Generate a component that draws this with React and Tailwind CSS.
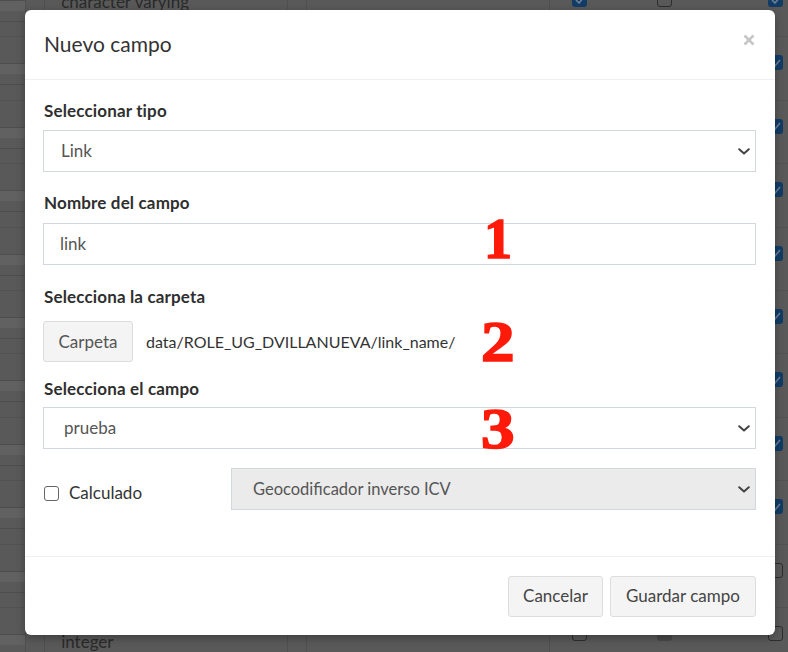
import React from "react";

const font = { fontFamily: "Lato, 'Liberation Sans', sans-serif" };
const serif = { fontFamily: "'Liberation Serif', serif" };

function Chevron() {
  return (
    <svg width="12" height="7" viewBox="0 0 12 7" className="shrink-0">
      <path d="M1.2 1.2 L6 5.6 L10.8 1.2" fill="none" stroke="#444" strokeWidth="2" strokeLinecap="round" strokeLinejoin="round" />
    </svg>
  );
}

function BgCheck({ kind }) {
  if (kind === "blue")
    return (
      <div className="w-[15px] h-[15px] rounded-[3px] bg-[#123c66] flex items-center justify-center">
        <svg width="10" height="8" viewBox="0 0 10 8"><path d="M1 4 L4 7 L9 1" fill="none" stroke="#6d7f93" strokeWidth="1.6" /></svg>
      </div>
    );
  if (kind === "gray") return <div className="w-[15px] h-[15px] rounded-[3px] bg-[#4a4a4a]" />;
  return <div className="w-[15px] h-[15px] rounded-[3px] border border-[#2e2e2e] bg-[#595959]" />;
}

function BgRow({ i }) {
  const right = i <= 8 ? "blue" : "empty";
  const c1 = i === 0 ? "blue" : i === 10 ? "empty" : null;
  const c2 = i === 0 ? "empty" : i === 10 ? "gray" : null;
  return (
    <div className="flex h-[63.4px] shrink-0 border-b border-[#525252]">
      <div className="w-[26px] border-r border-[#505050] flex flex-col">
        <div className="h-[1px] mt-[26px] bg-[#4e4e4e]" />
        <div className="h-[10px] bg-[#616161]" />
        <div className="h-[1px] mt-[10px] bg-[#4e4e4e]" />
      </div>
      <div className="w-[20px] border-r border-[#505050]" />
      <div className={`w-[247px] border-r border-[#505050] flex items-start pl-[16px] text-[17px] text-[#2a2a2a] ${i === 10 ? "pt-[21px]" : "pt-[15px]"}`}>
        {i === 0 ? "character varying" : i === 10 ? "integer" : ""}
      </div>
      <div className="w-[20px] border-r border-[#505050]" />
      <div className="w-[247px] border-r border-[#4f4f4f]" />
      <div className="w-[23px]" />
      <div className="w-[20px] pt-[18px]">{c1 && <BgCheck kind={c1} />}</div>
      <div className="w-[66px]" />
      <div className="w-[20px] pt-[18px]">{c2 && <BgCheck kind={c2} />}</div>
      <div className="w-[94px]" />
      <div className="w-[20px] pt-[18px]"><BgCheck kind={right} /></div>
    </div>
  );
}

const label = "text-[17px] tracking-[0.15px] font-bold text-[#2f2f2f] leading-[21px] pl-[1px]";

export default function App() {
  return (
    <div className="relative w-[788px] h-[652px] overflow-hidden bg-[#595959]" style={font}>
      {/* dimmed background page */}
      <div className="flex flex-col mt-[-26px]">
        {Array.from({ length: 11 }).map((_, i) => (
          <BgRow key={i} i={i} />
        ))}
      </div>

      {/* modal */}
      <div className="absolute left-[25px] top-[10px] w-[750px] h-[625px] bg-white rounded-[6px] flex flex-col shadow-[0_3px_9px_rgba(0,0,0,0.3)]">
        <div className="h-[70px] shrink-0 border-b border-[#f0f0f0] flex items-center justify-between pl-[19px] pr-[20px]">
          <div className="text-[21px] text-[#333] leading-none pb-[2px]">Nuevo campo</div>
          <svg width="12" height="12" viewBox="0 0 12 12" className="mb-[10px]">
            <path d="M1.5 1.5 L10.5 10.5 M10.5 1.5 L1.5 10.5" stroke="#c6c6c6" strokeWidth="2.6" strokeLinecap="butt" />
          </svg>
        </div>

        <div className="flex-1 pl-[18px] pr-[19px] pt-[20px] flex flex-col">
          <div className={`${label} mb-[9px]`}>Seleccionar tipo</div>
          <div className="h-[42px] border border-[#d2d6de] flex items-center justify-between pl-[17px] pr-[5px] text-[17px] text-[#555]">
            <span>Link</span>
            <Chevron />
          </div>

          <div className={`${label} mt-[20px] mb-[10px]`}>Nombre del campo</div>
          <div className="h-[42px] border border-[#d2d6de] flex items-center pl-[16px] text-[17px] text-[#555]">
            link
          </div>

          <div className={`${label} mt-[21px] mb-[14px]`}>Selecciona la carpeta</div>
          <div className="flex items-center gap-[13px]">
            <div className="h-[41px] w-[90px] rounded-[3px] border border-[#ddd] bg-[#f4f4f4] flex items-center justify-center text-[17px] text-[#555]">
              Carpeta
            </div>
            <div className="text-[16px] text-[#333]">data/ROLE_UG_DVILLANUEVA/link_name/</div>
          </div>

          <div className={`${label} mt-[16px] mb-[8px]`}>Selecciona el campo</div>
          <div className="h-[42px] border border-[#d2d6de] flex items-center justify-between pl-[20px] pr-[5px] text-[17px] text-[#555]">
            <span>prueba</span>
            <Chevron />
          </div>

          <div className="flex items-center mt-[19px]">
            <div className="w-[188px] flex items-center gap-[10px] pl-[1px] pt-[8px]">
              <div className="w-[15px] h-[15px] rounded-[3px] border border-[#666] bg-white" />
              <span className="text-[17px] text-[#333]">Calculado</span>
            </div>
            <div className="flex-1 h-[42px] border border-[#d2d6de] bg-[#ebebeb] flex items-center justify-between pl-[21px] pr-[5px] text-[16.5px] text-[#555]">
              <span>Geocodificador inverso ICV</span>
              <Chevron />
            </div>
          </div>
        </div>

        <div className="h-[79px] shrink-0 border-t border-[#f0f0f0] flex items-start justify-end gap-[7px] pt-[19px] pr-[19px]">
          <div className="h-[41px] w-[95px] rounded-[3px] border border-[#ddd] bg-[#f4f4f4] flex items-center justify-center pb-[2px] text-[17px] text-[#444]">
            Cancelar
          </div>
          <div className="h-[41px] w-[146px] rounded-[3px] border border-[#ddd] bg-[#f4f4f4] flex items-center justify-center pb-[2px] text-[17px] text-[#444]">
            Guardar campo
          </div>
        </div>
      </div>

      {/* red annotations */}
      <div className="absolute left-[484px] top-[211px] text-[56px] leading-none font-black text-[#ff1a0a] [-webkit-text-stroke:1.6px_#ff1a0a]" style={serif}>1</div>
      <div className="absolute left-[481px] top-[314px] text-[56px] leading-none font-black text-[#ff1a0a] [-webkit-text-stroke:1.6px_#ff1a0a] scale-x-[1.2] origin-left" style={serif}>2</div>
      <div className="absolute left-[481px] top-[401px] text-[56px] leading-none font-black text-[#ff1a0a] [-webkit-text-stroke:1.6px_#ff1a0a] scale-x-[1.2] origin-left" style={serif}>3</div>
    </div>
  );
}
